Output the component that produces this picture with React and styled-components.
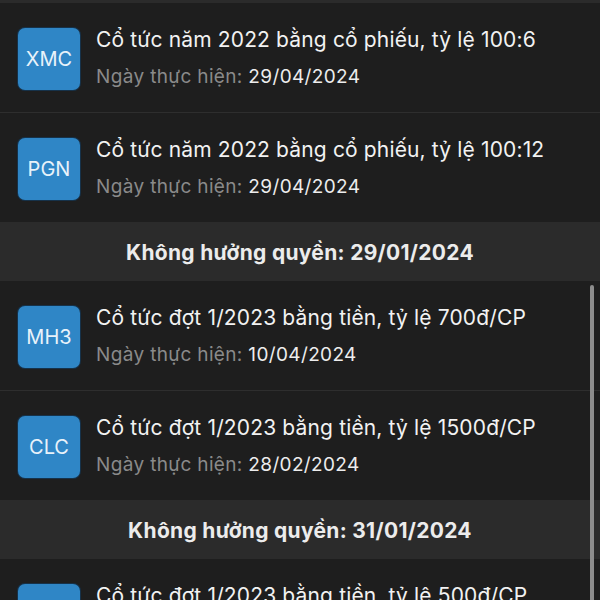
import React from 'react';
import styled, { createGlobalStyle } from 'styled-components';

const GlobalStyle = createGlobalStyle`
  html, body {
    margin: 0;
    padding: 0;
    background: #1e1e1e;
  }
  body {
    font-family: Inter, 'Liberation Sans', sans-serif;
  }
`;

const sections = [
  {
    items: [
      { code: 'XMC', title: 'Cổ tức năm 2022 bằng cổ phiếu, tỷ lệ 100:6', date: '29/04/2024' },
      { code: 'PGN', title: 'Cổ tức năm 2022 bằng cổ phiếu, tỷ lệ 100:12', date: '29/04/2024' },
    ],
  },
  {
    header: 'Không hưởng quyền: 29/01/2024',
    items: [
      { code: 'MH3', title: 'Cổ tức đợt 1/2023 bằng tiền, tỷ lệ 700đ/CP', date: '10/04/2024' },
      { code: 'CLC', title: 'Cổ tức đợt 1/2023 bằng tiền, tỷ lệ 1500đ/CP', date: '28/02/2024' },
    ],
  },
  {
    header: 'Không hưởng quyền: 31/01/2024',
    items: [{ code: 'DHT', title: 'Cổ tức đợt 1/2023 bằng tiền, tỷ lệ 500đ/CP', date: '15/03/2024' }],
  },
];

const App = () => {
  return (
    <Screen>
      <GlobalStyle />
      <List>
        {sections.map((section, si) => (
          <React.Fragment key={si}>
            {section.header && <SectionHeader>{section.header}</SectionHeader>}
            {section.items.map((item, ii) => (
              <Row key={item.code} $last={ii === section.items.length - 1}>
                <Badge>{item.code}</Badge>
                <Info>
                  <Title>{item.title}</Title>
                  <Sub>
                    Ngày thực hiện: <span>{item.date}</span>
                  </Sub>
                </Info>
              </Row>
            ))}
          </React.Fragment>
        ))}
      </List>
      <ScrollThumb />
    </Screen>
  );
};

const Screen = styled.div`
  position: relative;
  width: 600px;
  height: 600px;
  overflow: hidden;
  background: #1e1e1e;
`;

const List = styled.div`
  display: flex;
  flex-direction: column;
  border-top: 3px solid #2b2b2b;
`;

const SectionHeader = styled.div`
  flex: none;
  height: 59px;
  display: flex;
  align-items: center;
  justify-content: center;
  background: #2b2b2b;
  color: #ececec;
  font-size: 21px;
  font-weight: 700;
  letter-spacing: 0.3px;
  padding-top: 2px;
  box-sizing: border-box;
`;

const Row = styled.div`
  flex: none;
  height: ${(p) => (p.$last ? '109px' : '110px')};
  display: flex;
  align-items: center;
  gap: 16px;
  padding: 0 18px;
  box-sizing: border-box;
  border-bottom: ${(p) => (p.$last ? 'none' : '1px solid #2e2e2e')};
`;

const Badge = styled.div`
  flex: none;
  width: 62px;
  height: 62px;
  border-radius: 7px;
  background: #2f86c6;
  box-shadow: 0 0 0 1px #16324a;
  display: flex;
  align-items: center;
  justify-content: center;
  color: #e8f2fa;
  font-size: 20px;
  font-weight: 400;
  margin-top: 2px;
`;

const Info = styled.div`
  display: flex;
  flex-direction: column;
  gap: 12px;
  margin-top: 1px;
`;

const Title = styled.div`
  color: #f2f2f2;
  font-size: 21px;
  line-height: 26px;
  letter-spacing: 0.15px;
`;

const Sub = styled.div`
  color: #8a8a8a;
  font-size: 19px;
  line-height: 24px;
  letter-spacing: 0.35px;
  span {
    color: #ededed;
  }
`;

const ScrollThumb = styled.div`
  position: absolute;
  right: 6px;
  top: 285px;
  width: 4px;
  height: 330px;
  border-radius: 2px;
  background: #8c8c8c;
`;

export default App;
